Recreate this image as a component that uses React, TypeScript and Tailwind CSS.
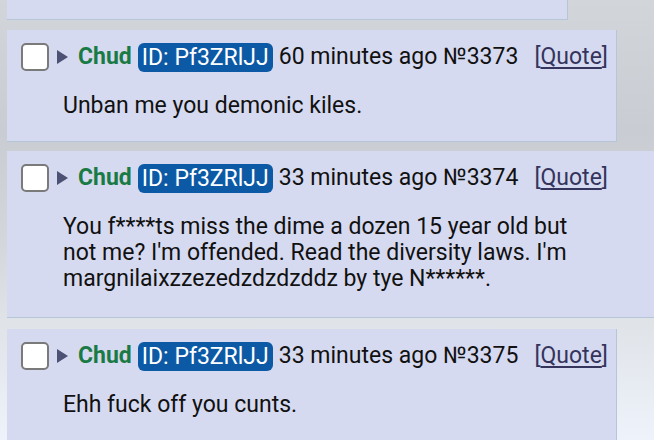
import React from "react";

type Post = {
  ago: string;
  no: string;
  lines: string[];
  wide?: boolean;
};

const posts: Post[] = [
  { ago: "60 minutes ago", no: "3373", lines: ["Unban me you demonic kiles."] },
  {
    ago: "33 minutes ago",
    no: "3374",
    wide: true,
    lines: [
      "You f****ts miss the dime a dozen 15 year old but",
      "not me? I'm offended. Read the diversity laws. I'm",
      "margnilaixzzezedzdzdzddz by tye N******.",
    ],
  },
  { ago: "33 minutes ago", no: "3375", lines: ["Ehh fuck off you cunts."] },
];

function PostBox({ p, className }: { p: Post; className: string }) {
  return (
    <div
      className={`${className} bg-[#d6daf0] border-b border-[#b7c5d9] pt-[13px] ${
        p.wide ? "w-[647px] pb-[25px]" : "w-[610px] border-r pb-[22px]"
      }`}
    >
      <div className="flex items-center h-[28px] whitespace-nowrap">
        <div className="ml-[14px] w-[28px] h-[28px] rounded-[5px] border-2 border-[#7a7a7a] bg-white shrink-0" />
        <svg width="11" height="14" viewBox="0 0 11 14" className="ml-[8px] shrink-0">
          <polygon points="0,0 11,7 0,14" fill="#4d5174" />
        </svg>
        <span className="ml-[10px] font-bold text-[#1a7a45]">Chud</span>
        <span className="ml-[6px] bg-[#0c5aa6] text-white rounded-[6px] px-[4px] h-[29px] leading-[29px]">
          ID: Pf3ZRlJJ
        </span>
        <span className="ml-[6px] text-[#111]">
          {p.ago} №{p.no}
        </span>
        <span className="ml-[16px] text-[#34345c]">
          [<span className="underline underline-offset-[3px] decoration-[1.5px]">Quote</span>]
        </span>
      </div>
      <div className="mt-[22px] pl-[56px] leading-[26px] text-[#111]">
        {p.lines.map((l, i) => (
          <div key={i} className="whitespace-nowrap">
            {l}
          </div>
        ))}
      </div>
    </div>
  );
}

export default function App() {
  return (
    <div
      className="w-[654px] h-[440px] overflow-hidden text-[23px] bg-[linear-gradient(180deg,#d2d5da_0%,#c9ccd2_30%,#d3d6da_55%,#dfe3e8_72%,#eef2fa_100%)]"
      style={{ fontFamily: "Roboto, 'Noto Sans', sans-serif" }}
    >
      <div className="flex flex-col pl-[7px]">
        <div className="w-[561px] h-[20px] bg-[#d6daf0] border-b border-r border-[#b7c5d9]" />
        <PostBox p={posts[0]} className="mt-[10px]" />
        <PostBox p={posts[1]} className="mt-[9px]" />
        <PostBox p={posts[2]} className="mt-[11px]" />
      </div>
    </div>
  );
}
